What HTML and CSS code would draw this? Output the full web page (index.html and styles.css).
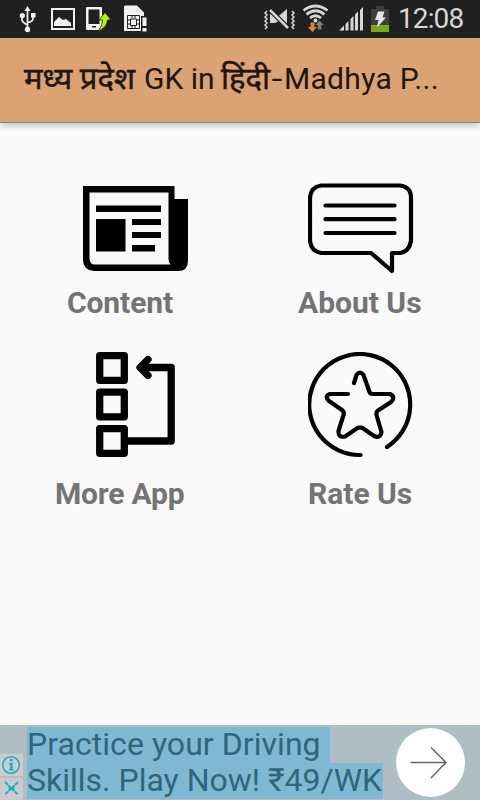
FILE: index.html
```html
<!DOCTYPE html>
<html lang="hi">
<head>
<meta charset="utf-8">
<title>मध्य प्रदेश GK</title>
<link rel="stylesheet" href="styles.css">
</head>
<body>
<div class="screen">
  <header class="status">
    <svg class="status-icons" width="390" height="38" viewBox="0 0 390 38">
      <g fill="none" stroke="#f2f2f2" stroke-width="1.7">
        <path d="M27.500 10V29M22 17v3q0 2 5.500 5M33 17v2q0 2-5.500 4"/>
      </g>
      <g fill="#f2f2f2">
        <path d="M27.500 6l3 5h-6z"/><circle cx="22.300" cy="15.500" r="2.600"/><path d="M31 13h4.500v4.500h-4.500z"/><circle cx="27.500" cy="29.500" r="2.700"/>
        <path fill-rule="evenodd" d="M51 8h24v22H51zM53 10v18h20V10z"/>
        <path d="M54 26v-4l5-5 4 3 3-1 5 4v3z"/>
        <path fill-rule="evenodd" d="M87 7h14q1 0 1 1v21q0 1-1 1H87q-1 0-1-1V8q0-1 1-1zM88.500 9.500v14.500h11V9.500zM92 26v1.500h4V26z"/>
        <path d="M125 5.500h12l7 7v3.500h-3V31h-17V6.500z"/><path d="M142.500 17.500h4v8.500h-4zM142.500 28h4v3.500h-4z"/>
      </g>
      <path d="M105 12.500l-6 7.500h3.500q0 6-4 10.500 8-2 9-10.500h3.500z" fill="#aaff00" stroke="#202020" stroke-width=".8"/>
      <path d="M127.500 15.500h12v13h-12zM127.500 20h3M127.500 24h3M136.500 20h3M136.500 24h3M130.500 19h6v6.500h-6zM132 15.500v3M135 15.500v3M132 25.500v3M135 25.500v3" fill="none" stroke="#202020" stroke-width="1"/>
      <g fill="#d6d6d6">
        <path d="M270 14h5l3 2.500 9-7.500v18l-9-5.500-3 1.500h-5z"/>
        <path d="M339 30.500l5-5v5zM345.500 24l3-3v9.500h-3zM350.500 19l3-3v14.500h-3zM355 14.500l3-3v19h-3zM360 10l3-3v23.500h-3z"/>
        <circle cx="315.500" cy="20.500" r="2"/>
      </g>
      <path d="M269 9l20 20" stroke="#202020" stroke-width="5"/>
      <path d="M270 10l18 18" stroke="#d6d6d6" stroke-width="2.500"/>
      <path d="M267 11l-2 2 2 2-2 2 2 2-2 2 2 2-2 2 2 2-2 2M292 11l2 2-2 2 2 2-2 2 2 2-2 2 2 2-2 2 2 2" fill="none" stroke="#d6d6d6" stroke-width="1.500"/>
      <path d="M303.500 10.500q12-9 24 0M306.500 14.300q9-7 18 0M310 18q5.500-4.500 11 0" fill="none" stroke="#d6d6d6" stroke-width="2.800"/>
      <path d="M310.500 22.500h4v4.500h2.500l-4.500 5-4.500-5h2.500z" fill="#da8a2c"/>
      <path d="M319.500 20.500l4 4.500h-2.200v4.500h-3.600V25h-2.200z" fill="#808080"/>
      <path d="M371 9h5V6h8v3h5v16h-18z" fill="#3d3d3d"/><path d="M371 25h18v7h-18z" fill="#77a818"/>
      <path d="M378 11.500h6.500l-2 6h3.500l-9 10 1.500-7.500h-3.500z" fill="#e6e6e6"/>
    </svg>
    <span class="clock">12:08</span>
  </header>
  <div class="appbar"><h1><span class="deva">मध्य प्रदेश</span><span class="gk"> GK in </span><span class="deva">हिंदी</span><span class="dash">-</span><span class="lat">Madhya P...</span></h1></div>
  <main>
    <section class="item content">
      <svg width="106" height="86" viewBox="0 0 106 86">
        <path fill-rule="evenodd" d="M0 0H91.500V13H105V75Q105 85 95 85H11Q0 84 0 74zM6.500 6.500V73Q7 78.500 12 78.500H87.500Q85.500 77 85.500 73V6.500z"/>
        <path d="M13 19.500h65V26H13zM13 33h29.500v32.500H13zM49 33h29v6H49zM49 46h29v6H49zM49 59h23v6.500H49z"/>
      </svg>
      <span>Content</span>
    </section>
    <section class="item about">
      <svg width="106" height="91" viewBox="0 0 106 91" class="line">
        <path d="M13 2.500H92Q103 4 103 14.500V58Q101 69 92 70H84V88L63 70H13Q3 68 2 58V14.500Q3 4 13 2.500zM17.500 22.500H86.500M17.500 36.200H86.500M17.500 50H86.500"/>
      </svg>
      <span>About Us</span>
    </section>
    <section class="item more">
      <svg width="80" height="106" viewBox="0 0 80 106">
        <g fill="none" stroke="#000" stroke-width="7.300" stroke-linejoin="round">
          <path d="M3.700 3.700H28.300V28.300H3.700zM3.700 40.200H28.300V64.800H3.700zM3.700 76.700H28.300V101.300H3.700zM28 89H75.200V15.500H46"/>
          <path d="M52 7.500L44 15.500l8 8" stroke-linecap="round"/>
        </g>
      </svg>
      <span>More App</span>
    </section>
    <section class="item rate">
      <svg width="106" height="106" viewBox="0 0 106 106" class="line">
        <path d="M52.500 103A50.500 50.500 0 1 1 79 95M46 31L48.500 23Q52 18 55.500 23L61.500 40Q62 42 65 42H82Q88 45 83 50L70 58.500Q68 60 68.500 63L73.500 80Q72 87 66 84L56 77Q52 74 48 77L37 84.500Q30 86 30.500 79L35.500 63Q36.500 60 34 58L21 49Q16 44 22 42H40"/>
      </svg>
      <span>Rate Us</span>
    </section>
  </main>
  <footer class="ad">
    <div class="choices">
      <div><svg width="22" height="22" viewBox="0 0 22 22"><circle cx="11" cy="11" r="8.300" fill="none" stroke="#12aecb" stroke-width="1.500"/><path d="M9.800 5h2.800v2.300H9.800zM9 9h3.600v6h1.200v1.500H9V15h1.200v-4.500H9z" fill="#12aecb"/></svg></div>
      <div><svg width="22" height="21" viewBox="0 0 22 21"><path d="M5 4l13 12.500M18 4L5 16.500M8.500 10.300h6" fill="none" stroke="#12aecb" stroke-width="1.900" stroke-dasharray="4 .5"/></svg></div>
    </div>
    <div class="copy"><span class="l1">Practice your Driving</span><span class="l2">Skills. Play Now! ₹49/WK</span></div>
    <div class="go"><svg width="69" height="69" viewBox="0 0 69 69"><path d="M14.500 34.500H50M35 19.500L50 34.500 35 50" fill="none" stroke="#666" stroke-width="1.500"/></svg></div>
  </footer>
</div>
</body>
</html>
```
FILE: styles.css
```css
body { margin: 0; font-family: Roboto, "Noto Sans", sans-serif; }
.screen { width: 480px; height: 800px; display: flex; flex-direction: column; overflow: hidden; background: #fafafa; }
.status { height: 38px; flex: none; display: flex; background: #202020; }
.status-icons { flex: none; }
.clock { margin-left: 8px; font-size: 28px; line-height: 38px; letter-spacing: -0.9px; color: #d6d6d6; white-space: nowrap; }
.appbar { height: 84px; flex: none; display: flex; align-items: center; padding-left: 24px; background: #dba274; border-bottom: 1px solid #858585; box-shadow: 0 4px 6px -1px #0003; }
h1 { margin: 0; padding-bottom: 2px; font-size: 30px; line-height: 40px; font-weight: 400; color: #1d160f; white-space: pre; }
.deva { font-size: 31px; -webkit-text-stroke: 0.5px #1d160f; }
.gk { margin-left: 1.5px; margin-right: -1px; }
.dash { display: inline-block; width: 14px; text-align: center; transform: scaleX(1.3); }
.lat { letter-spacing: 0.3px; }
main { flex: 1; display: grid; grid-template-columns: 240px 240px; grid-template-rows: 168px 1fr; padding-top: 60px; }
.item { display: flex; flex-direction: column; align-items: flex-start; }
.item svg { display: block; flex: none; }
.item span { font-size: 30px; line-height: 36px; font-weight: 700; color: #747474; white-space: nowrap; }
.content svg { margin: 3px 0 13px 83px; }
.content span { margin-left: 67px; letter-spacing: -0.1px; }
.about svg { margin: 0 0 11px 68px; }
.about span { margin-left: 58px; }
.more svg { margin: 1px 0 18px 95.5px; }
.more span { margin-left: 55px; letter-spacing: -0.2px; }
.rate svg { margin: 1px 0 18px 68px; }
.rate span { margin-left: 68px; }
.line { fill: none; stroke: #000; stroke-width: 4.200; stroke-linecap: round; stroke-linejoin: round; }
.ad { height: 75px; flex: none; display: flex; background: #afbec5; }
.choices { width: 23px; display: flex; flex-direction: column; gap: 2px; padding-top: 29px; }
.choices div { height: 22px; background: #ccc; }
.choices svg { display: block; }
.copy { width: 369px; margin-left: 4px; padding-top: 2px; display: flex; flex-direction: column; align-items: flex-start; font-size: 32px; line-height: 34px; color: #2f667c; white-space: nowrap; }
.copy span { height: 36px; background: #7fb8d2; }
.l1 { width: 303px; letter-spacing: 0.05px; }
.l2 { width: 356px; }
.go { width: 69px; height: 69px; margin-top: 3px; border-radius: 50%; background: #fff; }
```
